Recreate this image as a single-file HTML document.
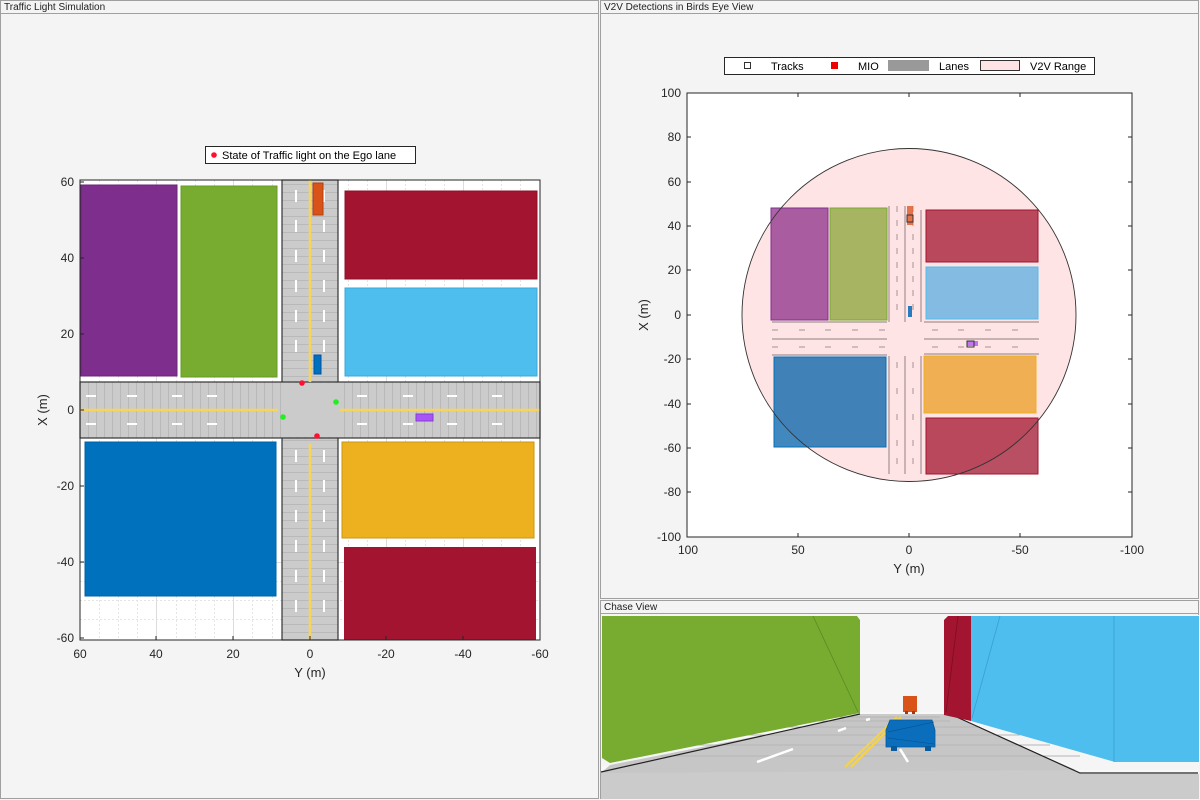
<!DOCTYPE html>
<html><head><meta charset="utf-8"><style>
html,body{margin:0;padding:0;background:#f4f4f4;}
svg{display:block;font-family:"Liberation Sans",Arial,sans-serif;}
</style></head><body>
<svg width="1200" height="800" viewBox="0 0 1200 800" xmlns="http://www.w3.org/2000/svg">
<defs>
<pattern id="hstr" width="8" height="8" patternUnits="userSpaceOnUse"><rect width="8" height="8" fill="#cbcbcb"/><rect x="0" y="0" width="1" height="8" fill="#b9b9b9"/></pattern>
<pattern id="vstr" width="8" height="8" patternUnits="userSpaceOnUse"><rect width="8" height="8" fill="#cbcbcb"/><rect x="0" y="0" width="8" height="1" fill="#b9b9b9"/></pattern>
</defs>
<rect width="1200" height="800" fill="#f4f4f4"/>
<rect x="0.5" y="0.5" width="598" height="798" fill="none" stroke="#a0a0a0"/>
<rect x="600.5" y="0.5" width="598" height="598" fill="none" stroke="#a0a0a0"/>
<rect x="600.5" y="600.5" width="598" height="198" fill="none" stroke="#a0a0a0"/>
<line x1="1" y1="13.5" x2="598" y2="13.5" stroke="#a0a0a0"/>
<line x1="601" y1="13.5" x2="1198" y2="13.5" stroke="#a0a0a0"/>
<line x1="601" y1="613.5" x2="1198" y2="613.5" stroke="#a0a0a0"/>
<text x="4" y="10" font-size="10" fill="#222">Traffic Light Simulation</text>
<text x="604" y="10" font-size="10" fill="#222">V2V Detections in Birds Eye View</text>
<text x="604" y="610" font-size="10" fill="#222">Chase View</text>

<rect x="80" y="180" width="460" height="460" fill="#fff"/>
<g stroke="#e4e4e4" stroke-width="1" stroke-dasharray="2,2">
<line x1="99.5" y1="180" x2="99.5" y2="640"/><line x1="118.5" y1="180" x2="118.5" y2="640"/><line x1="137.5" y1="180" x2="137.5" y2="640"/><line x1="176.5" y1="180" x2="176.5" y2="640"/><line x1="195.5" y1="180" x2="195.5" y2="640"/><line x1="214.5" y1="180" x2="214.5" y2="640"/><line x1="252.5" y1="180" x2="252.5" y2="640"/><line x1="272.5" y1="180" x2="272.5" y2="640"/><line x1="291.5" y1="180" x2="291.5" y2="640"/><line x1="329.5" y1="180" x2="329.5" y2="640"/><line x1="348.5" y1="180" x2="348.5" y2="640"/><line x1="367.5" y1="180" x2="367.5" y2="640"/><line x1="405.5" y1="180" x2="405.5" y2="640"/><line x1="425.5" y1="180" x2="425.5" y2="640"/><line x1="444.5" y1="180" x2="444.5" y2="640"/><line x1="482.5" y1="180" x2="482.5" y2="640"/><line x1="501.5" y1="180" x2="501.5" y2="640"/><line x1="520.5" y1="180" x2="520.5" y2="640"/>
<line x1="80" y1="600.5" x2="540" y2="600.5"/><line x1="80" y1="619.5" x2="540" y2="619.5"/><line x1="80" y1="581.5" x2="540" y2="581.5"/>
</g>
<g stroke="#dcdcdc"><line x1="156.5" y1="180" x2="156.5" y2="640"/><line x1="233.5" y1="180" x2="233.5" y2="640"/><line x1="386.5" y1="180" x2="386.5" y2="640"/><line x1="463.5" y1="180" x2="463.5" y2="640"/><line x1="80" y1="562.5" x2="540" y2="562.5"/></g>
<rect x="282" y="180" width="56" height="460" fill="url(#vstr)" stroke="#333" stroke-width="1.2"/>
<rect x="80" y="382" width="460" height="56" fill="url(#hstr)" stroke="#333" stroke-width="1.2"/>
<rect x="283" y="383" width="54" height="54" fill="#cbcbcb"/>
<g stroke="#f7d55a" stroke-width="2.6"><line x1="310" y1="180" x2="310" y2="382"/><line x1="310" y1="444" x2="310" y2="640"/><line x1="80" y1="410" x2="278" y2="410"/><line x1="340" y1="410" x2="540" y2="410"/></g>
<g stroke="#fff" stroke-width="2">
<path d="M296 190v12M324 190v12M296 220v12M324 220v12M296 250v12M324 250v12M296 280v12M324 280v12M296 310v12M324 310v12M296 340v12M324 340v12M296 450v12M324 450v12M296 480v12M324 480v12M296 510v12M324 510v12M296 540v12M324 540v12M296 570v12M324 570v12M296 600v12M324 600v12"/>
<path d="M86 396h10M127 396h10M172 396h10M207 396h10M86 424h10M127 424h10M172 424h10M207 424h10M357 396h10M403 396h10M447 396h10M492 396h10M357 424h10M403 424h10M447 424h10M492 424h10"/>
</g>
<rect x="81" y="185" width="96" height="191" fill="#7e2f8e" stroke="#6a2578"/>
<rect x="181" y="186" width="96" height="191" fill="#77ac30" stroke="#669a28"/>
<rect x="345" y="191" width="192" height="88" fill="#a2142f" stroke="#8d1027"/>
<rect x="345" y="288" width="192" height="88" fill="#4dbeee" stroke="#3aa8d8"/>
<rect x="85" y="442" width="191" height="154" fill="#0072bd" stroke="#0062a5"/>
<rect x="342" y="442" width="192" height="96" fill="#edb120" stroke="#c99612"/>
<rect x="344" y="547" width="192" height="93" fill="#a2142f"/>
<rect x="313" y="183" width="10" height="32" fill="#d95319" stroke="#b04010"/>
<rect x="314" y="355" width="7" height="19" fill="#0072bd" stroke="#0050a0"/>
<rect x="416" y="414" width="17" height="7" fill="#a855f7" stroke="#8a3ad0"/>
<circle cx="302" cy="383" r="2.8" fill="#ff1030"/>
<circle cx="317" cy="436" r="2.8" fill="#ff1030"/>
<circle cx="283" cy="417" r="2.8" fill="#22ee22"/>
<circle cx="336" cy="402" r="2.8" fill="#22ee22"/>
<rect x="80" y="180" width="460" height="460" fill="none" stroke="#262626"/>
<g stroke="#262626"><path d="M80 182h4M80 258h4M80 334h4M80 410h4M80 486h4M80 562h4M80 638h4M80 640v-4M156 640v-4M233 640v-4M310 640v-4M386 640v-4M463 640v-4M540 640v-4"/></g>
<g font-size="12" fill="#262626" text-anchor="end"><text x="74" y="186">60</text><text x="74" y="262">40</text><text x="74" y="338">20</text><text x="74" y="414">0</text><text x="74" y="490">-20</text><text x="74" y="566">-40</text><text x="74" y="642">-60</text></g>
<g font-size="12" fill="#262626" text-anchor="middle"><text x="80" y="658">60</text><text x="156" y="658">40</text><text x="233" y="658">20</text><text x="310" y="658">0</text><text x="386" y="658">-20</text><text x="463" y="658">-40</text><text x="540" y="658">-60</text></g>
<text x="310" y="677" font-size="13" fill="#262626" text-anchor="middle">Y (m)</text>
<text transform="translate(47,410) rotate(-90)" font-size="13" fill="#262626" text-anchor="middle">X (m)</text>
<rect x="205.5" y="146.5" width="210" height="17" fill="#fff" stroke="#262626"/>
<circle cx="214" cy="155" r="2.8" fill="#ff1030"/>
<text x="222" y="159" font-size="11" fill="#000">State of Traffic light on the Ego lane</text>

<rect x="687" y="93" width="445" height="444" fill="#fff"/>
<ellipse cx="909" cy="315" rx="167" ry="166.5" fill="#ffe4e6"/>
<g fill-opacity="0.75">
<rect x="771" y="208" width="57" height="112" fill="#8e2f8a" stroke="#7e2f8e"/>
<rect x="830" y="208" width="57" height="112" fill="#8aa635" stroke="#77ac30"/>
<rect x="926" y="210" width="112" height="52" fill="#a2142f" stroke="#a2142f"/>
<rect x="926" y="267" width="112" height="52" fill="#5aaee0" stroke="#4dbeee"/>
<rect x="774" y="357" width="112" height="90" fill="#0060a8" stroke="#0072bd"/>
<rect x="924" y="356" width="112" height="57" fill="#eb9e20" stroke="#edb120"/>
<rect x="926" y="418" width="112" height="56" fill="#a2142f" stroke="#a2142f"/>
</g>
<g stroke="#9a8a8c" stroke-width="1.2" opacity="0.9">
<path d="M889 206v116M905 206v116M921 210v112M889 356v118M905 356v118M921 356v118M772 322h115M772 339h115M772 355h115M924 322h115M924 339h115M924 354h115"/>
<path d="M897 206v6M913 206v6M897 220v6M913 220v6M897 234v6M913 234v6M897 248v6M913 248v6M897 262v6M913 262v6M897 276v6M913 276v6M897 290v6M913 290v6M897 304v6M913 304v6M897 362v6M913 362v6M897 388v6M913 388v6M897 414v6M913 414v6M897 440v6M913 440v6M897 458v6M913 458v6" stroke-width="1"/>
<path d="M772 330h6M799 330h6M825 330h6M852 330h6M879 330h6M772 347h6M799 347h6M825 347h6M852 347h6M879 347h6M932 330h6M958 330h6M985 330h6M1012 330h6M932 347h6M958 347h6M985 347h6M1012 347h6" stroke-width="1"/>
</g>
<rect x="907" y="206" width="6" height="19" fill="#e06030" opacity="0.85"/>
<rect x="907" y="215" width="6" height="7" fill="none" stroke="#333"/>
<rect x="908" y="306" width="4" height="11" fill="#2a7ac0"/>
<rect x="967" y="341" width="11" height="5" fill="#b855f7" opacity="0.8"/>
<rect x="967" y="341" width="7" height="6" fill="none" stroke="#333"/>
<ellipse cx="909" cy="315" rx="167" ry="166.5" fill="none" stroke="#333" stroke-width="0.9"/>
<rect x="687" y="93" width="445" height="444" fill="none" stroke="#262626"/>
<g stroke="#262626"><path d="M687 137h4M687 182h4M687 226h4M687 270h4M687 315h4M687 359h4M687 404h4M687 448h4M687 492h4M1132 137h-4M1132 182h-4M1132 226h-4M1132 270h-4M1132 315h-4M1132 359h-4M1132 404h-4M1132 448h-4M1132 492h-4M798 537v-4M909 537v-4M1020 537v-4M798 93v4M909 93v4M1020 93v4"/></g>
<g font-size="12" fill="#262626" text-anchor="end"><text x="681" y="97">100</text><text x="681" y="141">80</text><text x="681" y="186">60</text><text x="681" y="230">40</text><text x="681" y="274">20</text><text x="681" y="319">0</text><text x="681" y="363">-20</text><text x="681" y="408">-40</text><text x="681" y="452">-60</text><text x="681" y="496">-80</text><text x="681" y="541">-100</text></g>
<g font-size="12" fill="#262626" text-anchor="middle"><text x="688" y="554">100</text><text x="798" y="554">50</text><text x="909" y="554">0</text><text x="1020" y="554">-50</text><text x="1132" y="554">-100</text></g>
<text x="909" y="573" font-size="13" fill="#262626" text-anchor="middle">Y (m)</text>
<text transform="translate(648,315) rotate(-90)" font-size="13" fill="#262626" text-anchor="middle">X (m)</text>
<rect x="724.5" y="57.5" width="370" height="17" fill="#fff" stroke="#262626"/>
<rect x="744.5" y="62.5" width="6" height="6" fill="none" stroke="#333"/>
<text x="771" y="70" font-size="11">Tracks</text>
<rect x="831" y="62" width="7" height="7" fill="#ee0000"/>
<text x="858" y="70" font-size="11">MIO</text>
<rect x="888" y="60" width="41" height="11" fill="#999"/>
<text x="939" y="70" font-size="11">Lanes</text>
<rect x="980.5" y="60.5" width="39" height="10" fill="#ffe4e6" stroke="#333"/>
<text x="1030" y="70" font-size="11">V2V Range</text>

<rect x="601" y="615" width="598" height="184" fill="#f5f5f5"/>
<polygon points="601,771 860,713 950,713 1081,773 1198,773 1198,799 601,799" fill="#cbcbcb"/>
<polygon points="601,767 860,712 950,712 1079,770 1198,770 1198,774 1081,774 950,714 860,714 601,773" fill="#f8f8f8"/>
<polygon points="610,765 860,716 950,716 1076,770 601,773" fill="#c6c6c6"/>
<g stroke="#b5b5b5" stroke-width="1"><path d="M660 756h420M690 745h360M720 735h300M760 727h220M800 721h150M820 717h120"/></g>
<rect x="601" y="774" width="598" height="25" fill="#cbcbcb"/>
<polyline points="601,772 860,714" stroke="#222" fill="none" stroke-width="1.2"/>
<polyline points="950,714 1080,773 1198,773" stroke="#222" fill="none" stroke-width="1.2"/>
<g stroke="#fff" stroke-width="2.5"><path d="M757 762l36-13M838 731l8-3M866 720l4-1M900 749l8 13M885 732l4 5"/></g>
<g stroke="#f5d24a" stroke-width="2.2"><path d="M845 767l52-50M851 767l50-50"/></g>
<polygon points="602,616 857,616 860,620 860,713 610,763 602,758" fill="#77ac30"/>
<line x1="813" y1="616" x2="858" y2="712" stroke="#5c8a22" stroke-width="0.8"/>
<polygon points="948,616 971,616 971,721 944,715 944,620" fill="#a2142f"/>
<line x1="958" y1="616" x2="946" y2="712" stroke="#7a0e22" stroke-width="0.8"/>
<polygon points="971,616 1199,616 1199,762 1115,762 971,721" fill="#4dbeee"/>
<line x1="1114" y1="616" x2="1114" y2="762" stroke="#3aa0d0" stroke-width="0.8"/>
<line x1="1000" y1="616" x2="972" y2="718" stroke="#3aa0d0" stroke-width="0.8"/>
<rect x="903" y="696" width="14" height="16" fill="#d95319"/>
<rect x="905" y="711" width="3" height="3" fill="#a03a10"/><rect x="912" y="711" width="3" height="3" fill="#a03a10"/>
<path d="M890 720h42l3 10v17h-49v-17z" fill="#0a6ebc" stroke="#085a9a" stroke-width="0.8"/>
<path d="M888 732l46 -10M888 738l46 6" stroke="#084f8a" stroke-width="0.6"/>
<rect x="891" y="746" width="6" height="5" fill="#085a9a"/><rect x="925" y="746" width="6" height="5" fill="#085a9a"/>
</svg>
</body></html>
